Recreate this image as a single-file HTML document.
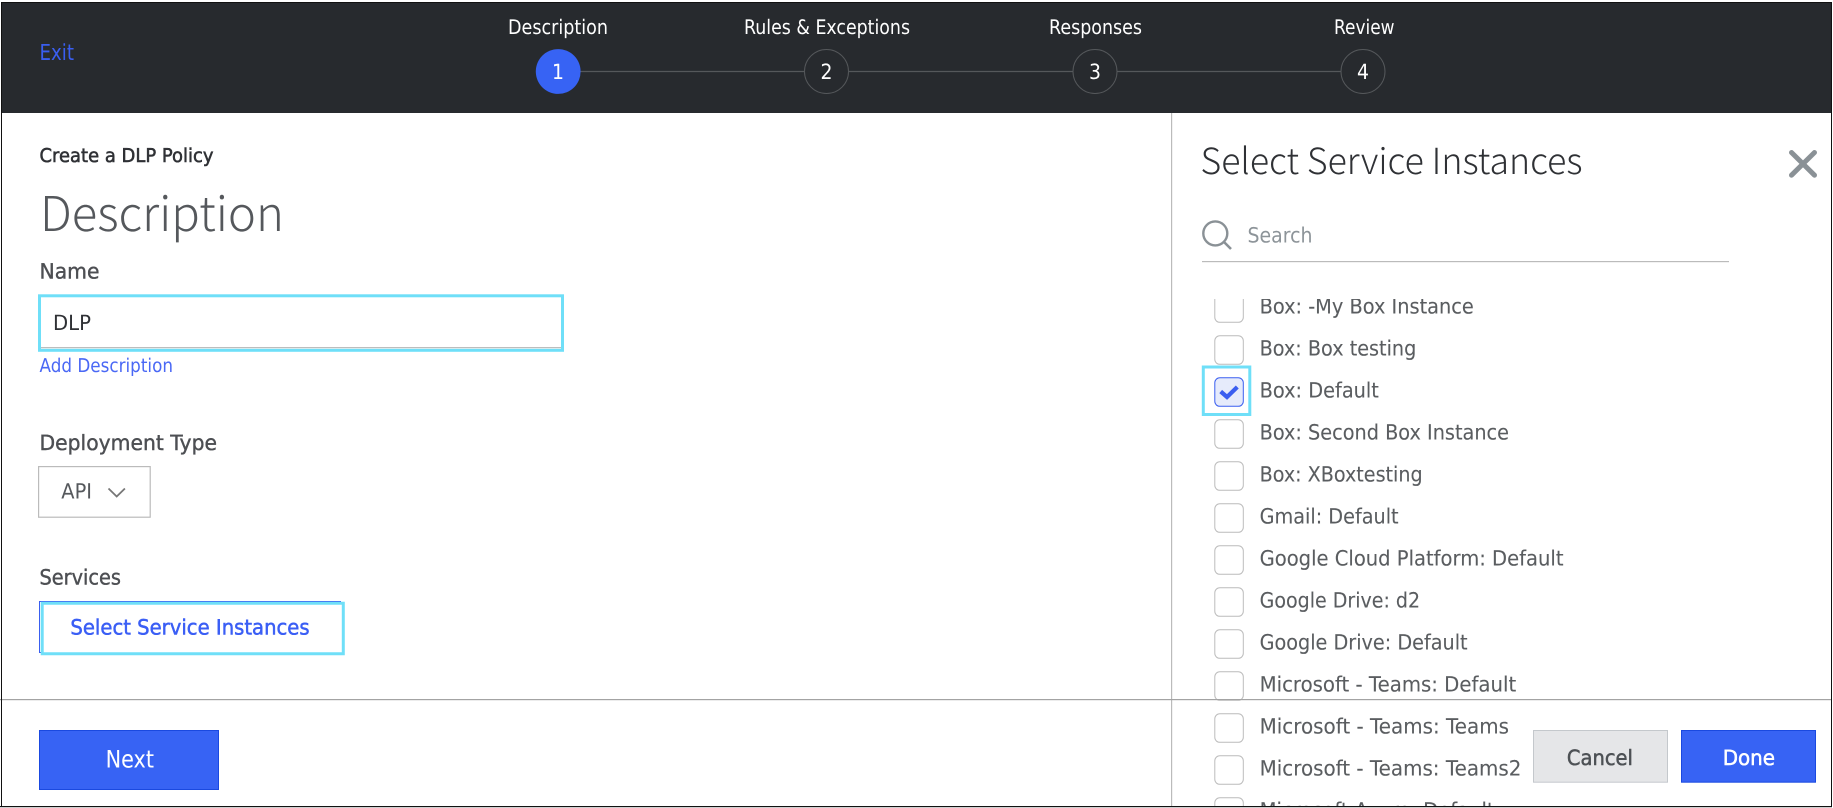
<!DOCTYPE html>
<html lang="en"><head><meta charset="utf-8"><title>Create a DLP Policy</title>
<style>
html,body{margin:0;padding:0;background:#fff;width:1833px;height:808px;overflow:hidden}
svg{display:block}
text{font-family:"DejaVu Sans","Liberation Sans",sans-serif;text-rendering:geometricPrecision}
.lt{font-family:"Noto Sans CJK JP","Liberation Sans",sans-serif;font-weight:300}
.hd{fill:#fff;font-size:20px}
.lb{fill:#4d4f53;font-size:21px;stroke:#4d4f53;stroke-width:.4}
.it{fill:#5a5d60;font-size:21px;stroke:#5a5d60;stroke-width:.1}
.cb{fill:#fff;stroke:#bcbcbc;stroke-width:1}
.num{fill:#fff;font-size:21px;text-anchor:middle}
</style></head><body>
<svg width="1833" height="808" viewBox="0 0 1833 808" xmlns="http://www.w3.org/2000/svg">
<rect width="1833" height="808" fill="#fff"/>
<defs><clipPath id="lc"><rect x="1172" y="299" width="600" height="507"/></clipPath></defs>
<!-- header -->
<rect x="1" y="2" width="1831" height="111" fill="#272a2e"/>
<text x="39.5" y="60" font-size="22" fill="#3a5ef0" textLength="34.5" lengthAdjust="spacingAndGlyphs">Exit</text>
<text class="hd" x="508" y="34" textLength="100" lengthAdjust="spacingAndGlyphs">Description</text>
<text class="hd" x="744" y="34" textLength="166" lengthAdjust="spacingAndGlyphs">Rules &amp; Exceptions</text>
<text class="hd" x="1049" y="34" textLength="93" lengthAdjust="spacingAndGlyphs">Responses</text>
<text class="hd" x="1334" y="34" textLength="60.5" lengthAdjust="spacingAndGlyphs">Review</text>
<path d="M580 71.5H804M849 71.5H1073M1117 71.5H1341" stroke="#55585b" stroke-width="1.2"/>
<circle cx="558.2" cy="71.5" r="22.4" fill="#3763f4"/>
<circle cx="826.5" cy="71.5" r="22" fill="none" stroke="#55585b" stroke-width="1"/>
<circle cx="1095" cy="71.5" r="22" fill="none" stroke="#55585b" stroke-width="1"/>
<circle cx="1363" cy="71.5" r="22" fill="none" stroke="#55585b" stroke-width="1"/>
<text class="num" x="558" y="79" textLength="12" lengthAdjust="spacingAndGlyphs">1</text>
<text class="num" x="826.5" y="79" textLength="12" lengthAdjust="spacingAndGlyphs">2</text>
<text class="num" x="1095" y="79" textLength="12" lengthAdjust="spacingAndGlyphs">3</text>
<text class="num" x="1363" y="79" textLength="12" lengthAdjust="spacingAndGlyphs">4</text>
<!-- left -->
<text x="39.5" y="162" font-size="19" fill="#2f3135" stroke="#2f3135" stroke-width=".55" textLength="174" lengthAdjust="spacingAndGlyphs">Create a DLP Policy</text>
<text class="lt" x="40" y="231" font-size="48" fill="#55585c" textLength="244" lengthAdjust="spacingAndGlyphs">Description</text>
<text class="lb" x="39.5" y="278.3" textLength="60" lengthAdjust="spacingAndGlyphs">Name</text>
<rect x="39.5" y="295.8" width="523" height="54.5" fill="#fff" stroke="#6fdff8" stroke-width="3"/>
<rect x="41" y="347" width="520" height="1.2" fill="#bdbdbd"/>
<text x="53" y="330" font-size="21" fill="#2f3135" textLength="38" lengthAdjust="spacingAndGlyphs">DLP</text>
<text x="39.5" y="372" font-size="19" fill="#4a68f5" textLength="133.5" lengthAdjust="spacingAndGlyphs">Add Description</text>
<text class="lb" x="39.5" y="450" textLength="177.5" lengthAdjust="spacingAndGlyphs">Deployment Type</text>
<rect x="38.6" y="466.6" width="111.6" height="50.6" fill="#fff" stroke="#bbb" stroke-width="1.2"/>
<text x="61.3" y="498.7" font-size="21" fill="#55585c" textLength="30.7" lengthAdjust="spacingAndGlyphs">API</text>
<path d="M108.5 488.5L116.7 496.5L124.9 488.5" fill="none" stroke="#777" stroke-width="1.8"/>
<text class="lb" x="39.5" y="584.3" textLength="81.5" lengthAdjust="spacingAndGlyphs">Services</text>
<rect x="39.5" y="601.5" width="301" height="51" fill="#fff" stroke="#3a5ef0" stroke-width="1"/>
<path d="M42.2 603.3H343.3V653.7H42.2Z" fill="#fff" stroke="#6fdff8" stroke-width="3"/>
<text x="70.4" y="634.7" font-size="21" fill="#3a5ef5" stroke="#3a5ef5" stroke-width=".5" textLength="239.2" lengthAdjust="spacingAndGlyphs">Select Service Instances</text>
<!-- right panel -->
<text class="lt" x="1200.5" y="173.8" font-size="36" fill="#2f3135" textLength="382" lengthAdjust="spacingAndGlyphs">Select Service Instances</text>
<path d="M1791.5 152.5L1814.5 175.2M1814.5 152.5L1791.5 175.2" fill="none" stroke="#8a9196" stroke-width="5" stroke-linecap="round"/>
<circle cx="1215.3" cy="233.4" r="12" fill="none" stroke="#8a9196" stroke-width="2.4"/>
<path d="M1224 242L1231 249" stroke="#8a9196" stroke-width="2.6" fill="none"/>
<text x="1247.5" y="242.7" font-size="21" fill="#8d9499" textLength="65" lengthAdjust="spacingAndGlyphs">Search</text>
<rect x="1202" y="261" width="527" height="1.2" fill="#bbb"/>
<g clip-path="url(#lc)">
<rect class="cb" x="1214.8" y="293.8" width="28.5" height="28.5" rx="5"/>
<rect class="cb" x="1214.8" y="335.8" width="28.5" height="28.5" rx="5"/>
<rect x="1214.8" y="377.8" width="28.5" height="28.5" rx="5" fill="#e6ebfb" stroke="#3a5ef0"/>
<rect class="cb" x="1214.8" y="419.8" width="28.5" height="28.5" rx="5"/>
<rect class="cb" x="1214.8" y="461.8" width="28.5" height="28.5" rx="5"/>
<rect class="cb" x="1214.8" y="503.8" width="28.5" height="28.5" rx="5"/>
<rect class="cb" x="1214.8" y="545.8" width="28.5" height="28.5" rx="5"/>
<rect class="cb" x="1214.8" y="587.8" width="28.5" height="28.5" rx="5"/>
<rect class="cb" x="1214.8" y="629.8" width="28.5" height="28.5" rx="5"/>
<rect class="cb" x="1214.8" y="671.8" width="28.5" height="28.5" rx="5"/>
<rect class="cb" x="1214.8" y="713.8" width="28.5" height="28.5" rx="5"/>
<rect class="cb" x="1214.8" y="755.8" width="28.5" height="28.5" rx="5"/>
<rect class="cb" x="1214.8" y="797.8" width="28.5" height="28.5" rx="5"/>
<text class="it" x="1259.6" y="313.6" textLength="214.2" lengthAdjust="spacingAndGlyphs">Box: -My Box Instance</text>
<text class="it" x="1259.6" y="355.6" textLength="156.7" lengthAdjust="spacingAndGlyphs">Box: Box testing</text>
<text class="it" x="1259.6" y="397.6" textLength="119.3" lengthAdjust="spacingAndGlyphs">Box: Default</text>
<text class="it" x="1259.6" y="439.6" textLength="249.4" lengthAdjust="spacingAndGlyphs">Box: Second Box Instance</text>
<text class="it" x="1259.6" y="481.6" textLength="163" lengthAdjust="spacingAndGlyphs">Box: XBoxtesting</text>
<text class="it" x="1259.6" y="523.6" textLength="139" lengthAdjust="spacingAndGlyphs">Gmail: Default</text>
<text class="it" x="1259.6" y="565.6" textLength="303.9" lengthAdjust="spacingAndGlyphs">Google Cloud Platform: Default</text>
<text class="it" x="1259.6" y="607.6" textLength="160.5" lengthAdjust="spacingAndGlyphs">Google Drive: d2</text>
<text class="it" x="1259.6" y="649.6" textLength="208" lengthAdjust="spacingAndGlyphs">Google Drive: Default</text>
<text class="it" x="1259.6" y="691.6" textLength="256.6" lengthAdjust="spacingAndGlyphs">Microsoft - Teams: Default</text>
<text class="it" x="1259.6" y="733.6" textLength="249.4" lengthAdjust="spacingAndGlyphs">Microsoft - Teams: Teams</text>
<text class="it" x="1259.6" y="775.6" textLength="261.8" lengthAdjust="spacingAndGlyphs">Microsoft - Teams: Teams2</text>
<text class="it" x="1259.6" y="817.6" textLength="235" lengthAdjust="spacingAndGlyphs">Microsoft Azure: Default</text>
</g>
<rect x="1203.3" y="367" width="46.5" height="47.5" fill="none" stroke="#6fdff8" stroke-width="3"/>
<path d="M1220.7 391.5L1227 397L1237.3 387" fill="none" stroke="#3a5ef0" stroke-width="4.2"/>
<!-- dividers -->
<rect x="1171" y="113" width="1.2" height="693" fill="#bbb"/>
<rect x="0" y="699" width="1832" height="1.2" fill="#a3a3a3"/>
<!-- footer buttons -->
<rect x="39.5" y="730.5" width="179" height="59" fill="#3763f4" stroke="#1a49e0"/>
<text x="105.6" y="767.7" font-size="24" fill="#fff" textLength="48.4" lengthAdjust="spacingAndGlyphs">Next</text>
<rect x="1533.5" y="730.5" width="134" height="51.7" fill="#e5e6e8" stroke="#c4c8cc"/>
<text x="1566.9" y="765" font-size="21" fill="#4d5155" stroke="#4d5155" stroke-width=".5" textLength="66.1" lengthAdjust="spacingAndGlyphs">Cancel</text>
<rect x="1681.5" y="730.5" width="134" height="51.7" fill="#3763f4" stroke="#1a49e0"/>
<text x="1722.7" y="765" font-size="21" fill="#fff" stroke="#fff" stroke-width=".5" textLength="52.3" lengthAdjust="spacingAndGlyphs">Done</text>
<!-- outer frame -->
<path d="M1.5 807V2.5H1831.5V806.5H1" fill="none" stroke="#111" stroke-width="1"/>
<rect x="0" y="806" width="1832" height="1.2" fill="#111"/>
</svg>
</body></html>
